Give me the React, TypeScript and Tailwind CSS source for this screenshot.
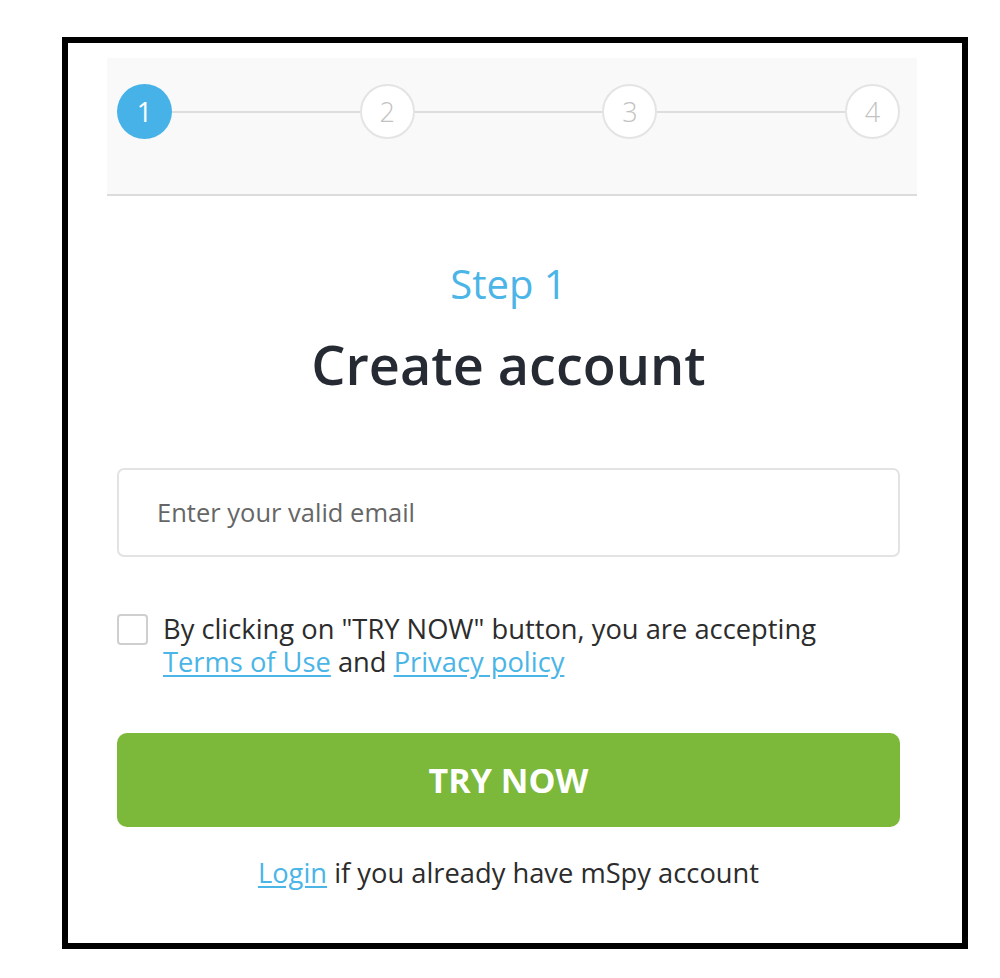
import React from "react";

function Circle({ n, active }: { n: number; active?: boolean }) {
  if (active) {
    return (
      <div className="w-[55px] h-[55px] rounded-full bg-[#46b2e8] flex items-center justify-center text-white text-[27px] leading-none shrink-0">
        {n}
      </div>
    );
  }
  return (
    <div className="w-[55px] h-[55px] rounded-full bg-white border-2 border-[#e4e4e4] flex items-center justify-center text-[#c2c2c2] text-[27px] font-light leading-none shrink-0">
      {n}
    </div>
  );
}

function Line() {
  return <div className="flex-1 h-[2px] bg-[#dedede]" />;
}

export default function App() {
  return (
    <div className="w-[1000px] h-[978px] bg-white overflow-hidden" style={{ fontFamily: '"Open Sans", "Noto Sans", sans-serif' }}>
      <div className="ml-[62px] mt-[37px] w-[906px] h-[912px] border-[6px] border-black bg-white">
        <div className="ml-[39px] mt-[15px] w-[810px] h-[138px] bg-[#f9f9f9] border-b-2 border-[#dcdcdc] pl-[10px] pr-[17px] pt-[26px]">
          <div className="flex items-center">
            <Circle n={1} active />
            <Line />
            <Circle n={2} />
            <Line />
            <Circle n={3} />
            <Line />
            <Circle n={4} />
          </div>
        </div>
        <div className="ml-[49px] w-[783px] flex flex-col">
          <div className="mt-[62px] text-center text-[40px] leading-[52px] text-[#4ab5e6]">Step 1</div>
          <div className="mt-[24px] text-center text-[54px] leading-[60px] font-semibold text-[#262a33]">Create account</div>
          <div className="mt-[74px] h-[89px] border-2 border-[#e3e3e3] rounded-[7px] flex items-center pl-[38px] text-[25.5px] text-[#666]">
            Enter your valid email
          </div>
          <div className="mt-[56px] flex items-start">
            <div className="w-[31px] h-[31px] border-2 border-[#cfcfcf] rounded-[4px] shrink-0 mt-[1px]" />
            <div className="ml-[15px] text-[27.3px] leading-[33px] text-[#2c2c2c] -mt-[1px]">
              <div>By clicking on "TRY NOW" button, you are accepting</div>
              <div>
                <span className="text-[#4ab5e6] underline underline-offset-[3px]">Terms of Use</span> and{" "}
                <span className="text-[#4ab5e6] underline underline-offset-[3px]">Privacy policy</span>
              </div>
            </div>
          </div>
          <div className="mt-[55px] h-[94px] rounded-[10px] bg-[#7cb83a] flex items-center justify-center text-white text-[34px] font-bold">
            TRY NOW
          </div>
          <div className="mt-[28px] text-center text-[27.3px] leading-[36px] text-[#2c2c2c]">
            <span className="text-[#4ab5e6] underline underline-offset-[3px]">Login</span> if you already have mSpy account
          </div>
        </div>
      </div>
    </div>
  );
}
